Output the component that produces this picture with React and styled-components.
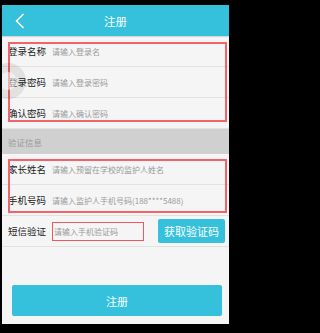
import React from "react"
import styled, { createGlobalStyle } from "styled-components"

const fields = [
    { label: "登录名称", hint: "请输入登录名" },
    { label: "登录密码", hint: "请输入登录密码" },
    { label: "确认密码", hint: "请输入确认密码" },
]
const parentFields = [
    { label: "家长姓名", hint: "请输入预留在学校的监护人姓名" },
    { label: "手机号码", hint: "请输入监护人手机号码(188****5488)" },
]

function App() {
    return (
        <>
            <GlobalStyle />
            <Screen>
                <Header>
                    <BackButton>
                        <svg width="10" height="16" viewBox="0 0 10 16">
                            <polyline points="8.5,1 1.5,8 8.5,15" fill="none" stroke="#fff" strokeWidth="1.5" />
                        </svg>
                    </BackButton>
                    <Title>注册</Title>
                    <span />
                </Header>
                <Group $top={6} $bottom={7}>
                    {fields.map((f) => (
                        <Row key={f.label}>
                            <Label>{f.label}</Label>
                            <Hint>{f.hint}</Hint>
                        </Row>
                    ))}
                </Group>
                <Section>验证信息</Section>
                <Group $top={5} $bottom={3}>
                    {parentFields.map((f) => (
                        <Row key={f.label}>
                            <Label>{f.label}</Label>
                            <Hint>{f.hint}</Hint>
                        </Row>
                    ))}
                </Group>
                <Row>
                    <Label>短信验证</Label>
                    <CodeInput>请输入手机验证码</CodeInput>
                    <CodeButton>获取验证码</CodeButton>
                </Row>
                <SubmitButton>注册</SubmitButton>
                <FloatBall />
            </Screen>
        </>
    )
}

export default App

//styled components
const GlobalStyle = createGlobalStyle`
    html, body {
        margin: 0;
        padding: 0;
        background: #000;
    }
    body {
        font-family: "Noto Sans CJK SC", "Liberation Sans", sans-serif;
    }
`
const Screen = styled.div`
    position: relative;
    width: 227px;
    height: 319px;
    margin: 5px 0 0 2px;
    background: #f5f5f5;
    overflow: hidden;
    display: flex;
    flex-direction: column;
`
const Header = styled.div`
    height: 31px;
    flex: none;
    background: #35c1db;
    display: grid;
    grid-template-columns: 40px 1fr 40px;
    align-items: center;
    box-shadow: 0 1px 1px rgba(0, 0, 0, 0.12);
`
const BackButton = styled.div`
    padding-left: 13px;
    display: flex;
    align-items: center;
`
const Title = styled.div`
    text-align: center;
    color: #fff;
    font-size: 11.5px;
`
const Group = styled.div`
    position: relative;
    &::after {
        content: "";
        position: absolute;
        top: ${(p) => p.$top}px;
        bottom: ${(p) => p.$bottom}px;
        left: 6px;
        right: 2px;
        border: 2px solid #f2636a;
        pointer-events: none;
    }
`
const Row = styled.div`
    height: 31px;
    box-sizing: border-box;
    border-bottom: 1px solid #e2e2e2;
    display: flex;
    align-items: center;
    padding-left: 6px;
`
const Label = styled.span`
    width: 44px;
    flex: none;
    font-size: 9.5px;
    color: #222;
    white-space: nowrap;
`
const Hint = styled.span`
    font-size: 8px;
    color: #9a9a9a;
    white-space: nowrap;
`
const Section = styled.div`
    height: 25px;
    background: #d0d0d0;
    color: #9a9a9a;
    font-size: 8.5px;
    display: flex;
    align-items: center;
    padding-left: 6px;
`
const CodeInput = styled.span`
    width: 92px;
    height: 19px;
    box-sizing: border-box;
    border: 1.5px solid #ee5860;
    font-size: 8px;
    color: #9a9a9a;
    display: flex;
    align-items: center;
    padding-left: 1px;
    white-space: nowrap;
`
const CodeButton = styled.span`
    margin-left: auto;
    margin-right: 4px;
    width: 67px;
    height: 24px;
    border-radius: 2px;
    background: #35c1db;
    color: #fff;
    font-size: 11px;
    display: flex;
    align-items: center;
    justify-content: center;
`
const SubmitButton = styled.div`
    margin: 38px 7px 0 10px;
    height: 31px;
    border-radius: 2px;
    background: #35c1db;
    color: #fff;
    font-size: 11px;
    display: flex;
    align-items: center;
    justify-content: center;
`
const FloatBall = styled.div`
    position: absolute;
    left: -12px;
    top: 58px;
    width: 36px;
    height: 36px;
    border-radius: 50%;
    background: rgba(0, 0, 0, 0.08);
    &::after {
        content: "";
        position: absolute;
        left: 9px;
        top: 9px;
        width: 18px;
        height: 18px;
        border-radius: 50%;
        background: rgba(255, 255, 255, 0.5);
    }
`
